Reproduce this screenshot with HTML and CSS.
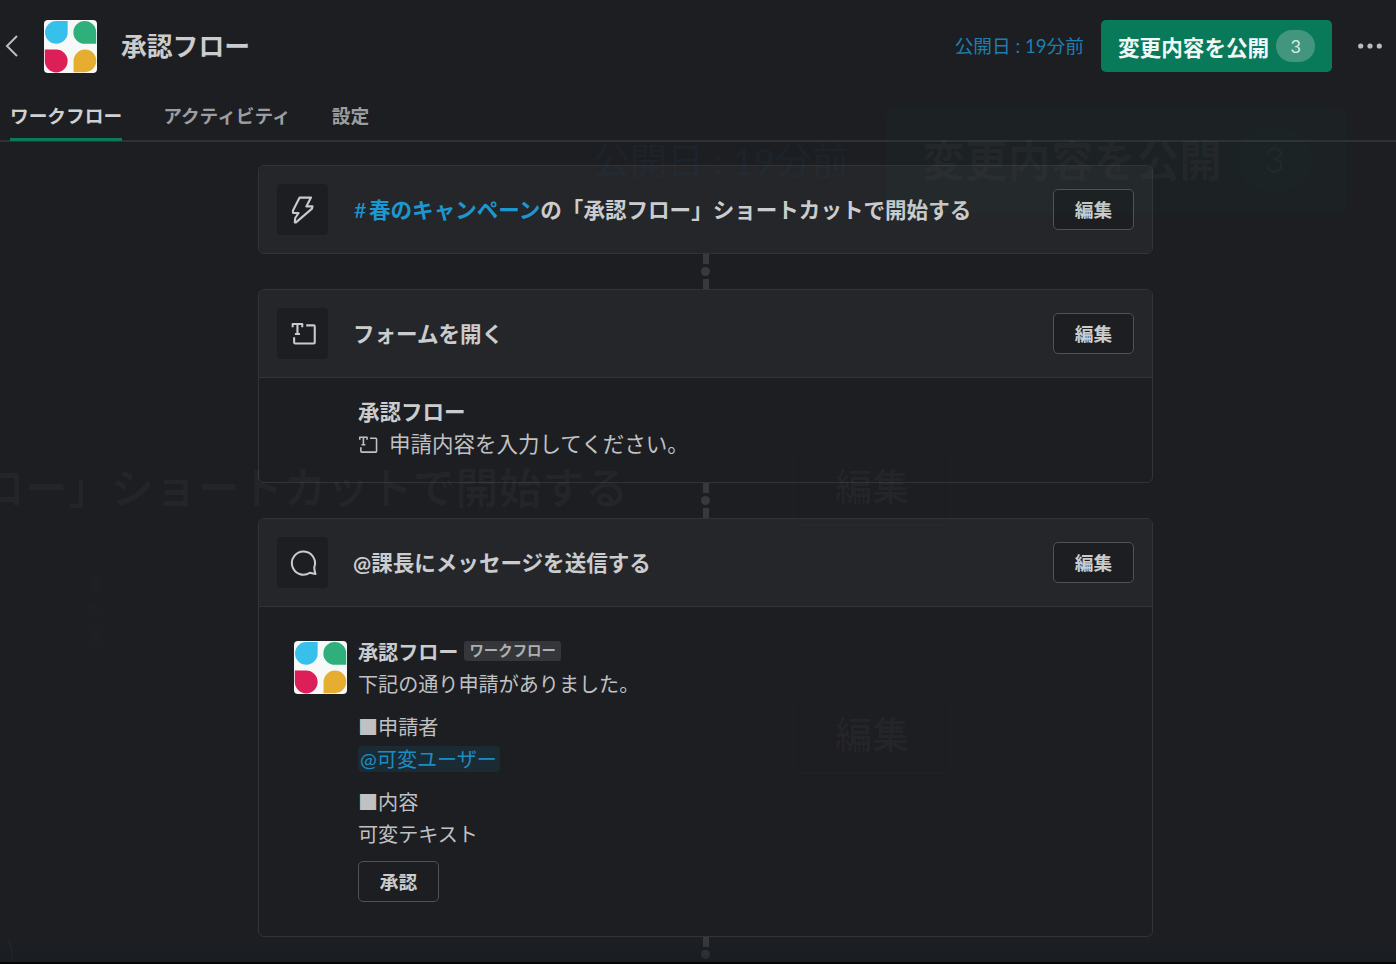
FILE: index.html
```html
<!DOCTYPE html>
<html lang="ja">
<head>
<meta charset="utf-8">
<title>承認フロー</title>
<link rel="stylesheet" href="styles.css">
</head>
<body>
<svg class="defs" aria-hidden="true">
  <symbol id="logo" viewBox="0 0 52 52">
    <rect width="52" height="52" rx="4" fill="#f7f8f8"/>
    <path fill="#37c0ea" d="M12 1H23.2V12A11.1 11.1 0 1 1 12 1Z"/>
    <path fill="#2fb07b" d="M40 1A11.2 11.2 0 0 1 51.2 12.2V23.4H40A11.2 11.2 0 0 1 40 1Z"/>
    <path fill="#dc1f59" d="M.8 29H12A11.2 11.2 0 1 1 .8 40.2Z"/>
    <path fill="#e5ae30" d="M40.2 29A11.1 11.1 0 1 1 40.2 51.2H29V40.2A11.2 11.2 0 0 1 40.2 29Z"/>
  </symbol>
  <symbol id="form" viewBox="0 0 24 24">
    <g fill="none" stroke="currentColor" stroke-width="2" stroke-linejoin="round">
      <path d="M14.600 4.200H21.800Q22.800 4.200 22.800 5.200V20.600Q22.800 21.600 21.800 21.600H4.200Q3 21.600 3 20.400V15.600"/>
      <path d="M1.600 6V2.800H10.800V6M6.200 2.800V12.400M3.800 12.400H8.600"/>
    </g>
  </symbol>
</svg>

<header class="header">
  <div class="topbar">
    <svg class="back" viewBox="0 0 14 24"><path d="M12 2 2 12 12 22"/></svg>
    <svg class="logo"><use href="#logo"/></svg>
    <h1 class="title">承認フロー</h1>
    <span class="published">公開日 : 19分前</span>
    <button class="publish">変更内容を公開<span class="count">3</span></button>
    <svg class="more" viewBox="0 0 24 6"><circle cx="2.7" cy="3" r="2.6"/><circle cx="12" cy="3" r="2.6"/><circle cx="21.3" cy="3" r="2.6"/></svg>
  </div>
  <nav class="tabs">
    <a class="tab tab-active">ワークフロー</a>
    <a class="tab">アクティビティ</a>
    <a class="tab">設定</a>
  </nav>
</header>

<main class="flow">
  <section class="card">
    <div class="step">
      <span class="step-icon"><svg class="icon" viewBox="0 0 24 28"><path d="M8.600 1.600H20L15.300 10.400H21.500L21 12.600L5 26.400H3.800L4.200 22L7.600 17H2.200Q1.600 15.600 2 14.400Z"/></svg></span>
      <h2 class="step-title"><span class="channel"><span class="hash">#</span>春のキャンペーン</span>の「承認フロー」ショートカットで開始する</h2>
      <button class="btn">編集</button>
    </div>
  </section>

  <div class="connector"><i class="bar"></i><i class="dot"></i><i class="bar"></i></div>

  <section class="card card-form">
    <div class="step step-lined">
      <span class="step-icon"><svg class="icon icon-form"><use href="#form"/></svg></span>
      <h2 class="step-title">フォームを開く</h2>
      <button class="btn">編集</button>
    </div>
    <div class="form-body">
      <strong>承認フロー</strong>
      <div class="field"><svg class="field-icon"><use href="#form"/></svg>申請内容を入力してください。</div>
    </div>
  </section>

  <div class="connector"><i class="bar"></i><i class="dot"></i><i class="bar"></i></div>

  <section class="card card-message">
    <div class="step step-lined">
      <span class="step-icon"><svg class="icon icon-bubble" viewBox="0 0 28 28"><path d="M26.400 26L20.600 24.600A12 12 0 1 1 25.200 18.800Q25 21 26.400 26Z"/></svg></span>
      <h2 class="step-title">@課長にメッセージを送信する</h2>
      <button class="btn">編集</button>
    </div>
    <div class="message">
      <svg class="logo"><use href="#logo"/></svg>
      <div class="message-body">
        <div class="sender"><strong>承認フロー</strong><span class="app-badge">ワークフロー</span></div>
        <div class="line">下記の通り申請がありました。</div>
        <div class="line line-gap">■申請者</div>
        <div class="line line-mention"><span class="mention">@可変ユーザー</span></div>
        <div class="line line-gap">■内容</div>
        <div class="line">可変テキスト</div>
        <button class="btn approve">承認</button>
      </div>
    </div>
  </section>

  <div class="connector"><i class="bar"></i><i class="dot"></i><i class="bar"></i></div>
</main>

<div class="afterimage" aria-hidden="true">
  <span class="ai ai-date">公開日 : 19分前</span>
  <span class="ai ai-publish"></span>
  <span class="ai ai-publish-text">変更内容を公開</span>
  <span class="ai ai-count">3</span>
  <span class="ai ai-title">ロー」ショートカットで開始する</span>
  <span class="ai ai-btn ai-btn-a">編集</span>
  <span class="ai ai-btn ai-btn-b">編集</span>
  <span class="ai ai-card ai-card-a"></span>
  <span class="ai ai-card ai-card-b"></span>
  <span class="ai ai-dots"><i class="bar"></i><i class="dot"></i><i class="bar"></i></span>
  <span class="ai ai-tail">)。</span>
</div>
<div class="edge" aria-hidden="true"></div>
</body>
</html>
```
FILE: styles.css
```css
* { box-sizing: border-box; }

body {
  margin: 0;
  width: 1396px;
  height: 964px;
  overflow: hidden;
  position: relative;
  background: #1d1e22;
  color: #cbcccd;
  font-family: Lato, "Noto Sans CJK JP", sans-serif;
  font-size: 20.1px;
}

h1, h2 { margin: 0; }
button { font-family: inherit; }
.defs { position: absolute; width: 0; height: 0; }

/* header */
.header { height: 142px; border-bottom: 2px solid #2f3135; }
.topbar {
  display: flex;
  align-items: center;
  height: 92px;
  padding: 0 14px 0 5px;
}
.back {
  width: 14px;
  height: 24px;
  margin-right: 25px;
  fill: none;
  stroke: #bcbdbe;
  stroke-width: 2;
}
.logo { width: 53px; height: 53px; flex: none; }
.title {
  margin-left: 24px;
  font-size: 25.8px;
  line-height: 36px;
}
.published { margin-left: auto; color: #1d7fb0; font-size: 18.7px; line-height: 28px; }
.publish {
  display: flex;
  align-items: center;
  width: 231px;
  height: 52px;
  margin-left: 17px;
  padding: 0 0 0 17px;
  border: 0;
  border-radius: 5px;
  background: #087a5a;
  color: #f2f7f5;
  font-size: 21.6px;
  font-weight: 700;
  white-space: nowrap;
}
.count {
  width: 39px;
  height: 32px;
  margin-left: 7px;
  border-radius: 16px;
  background: #41967d;
  color: #d9ebe5;
  font-size: 18px;
  font-weight: 400;
  line-height: 32px;
  text-align: center;
}
.more { width: 24px; height: 6px; margin-left: 26px; fill: #bbbcbd; }

.tabs { display: flex; gap: 41px; height: 49px; padding-left: 10px; }
.tab {
  height: 49px;
  font-size: 18.7px;
  font-weight: 700;
  line-height: 48px;
  color: #9c9da0;
}
.tab-active { color: #cfd0d1; border-bottom: 3px solid #087a5a; }

/* flow of steps */
.flow { width: 895px; margin: 23px 0 0 258px; }
.card {
  height: 89px;
  border: 1.4px solid #323337;
  border-radius: 6px;
  overflow: hidden;
}
.card-form { height: 194px; }
.card-message { height: 419px; }
.step {
  display: flex;
  align-items: center;
  height: 87px;
  padding: 0 18px;
  background: #25262a;
}
.step-lined { height: 88px; border-bottom: 1px solid #323337; }
.step-icon {
  display: flex;
  align-items: center;
  justify-content: center;
  width: 51px;
  height: 51px;
  padding-left: 1px;
  border-radius: 4px;
  background: #1d1e22;
}
.icon {
  width: 24px;
  height: 28px;
  fill: none;
  stroke: #c9cacb;
  stroke-width: 2.1;
  stroke-linejoin: round;
}
.icon-form { width: 25px; height: 25px; color: #c9cacb; stroke: none; }
.icon-bubble { width: 27px; height: 27px; }
.step-title {
  flex: 1;
  margin-left: 25px;
  font-size: 21.55px;
  line-height: 32px;
  white-space: nowrap;
}
.channel { color: #1d97cf; }
.hash { display: inline-block; width: 15px; margin-left: 1px; font-weight: 400; }
.btn {
  width: 81px;
  height: 41px;
  padding: 0;
  border: 1.4px solid #515256;
  border-radius: 5px;
  background: #1d1e22;
  color: #cbcccd;
  font-size: 18.7px;
  font-weight: 700;
  line-height: 36px;
}
.connector {
  display: flex;
  flex-direction: column;
  align-items: center;
  justify-content: space-between;
  height: 35px;
}
.bar { width: 6px; height: 10px; background: #38393d; }
.dot { width: 9px; height: 9px; border-radius: 50%; background: #38393d; }

.form-body { padding: 18px 0 0 99px; font-size: 21.5px; line-height: 32px; }
.form-body strong { display: block; }
.field { display: flex; align-items: center; color: #c0c1c2; }
.field-icon { width: 20px; height: 19px; margin-right: 11px; }

.message { display: flex; padding: 29px 0 0 35px; }
.message .logo { margin-top: 5px; }
.message-body { margin-left: 11px; line-height: 32px; }
.sender { display: flex; align-items: center; }
.app-badge {
  height: 20px;
  margin: -2px 0 0 6px;
  padding: 0 5px;
  border-radius: 3px;
  background: #35363a;
  color: #aeafb1;
  font-size: 14.4px;
  font-weight: 700;
  line-height: 20px;
}
.line { height: 32px; color: #c0c1c2; }
.line-gap { margin-top: 11px; }
.line-mention { display: flex; align-items: center; }
.mention {
  height: 26px;
  padding: 0 3px 0 2px;
  border-radius: 4px;
  background: #1b2b33;
  color: #1d8cc4;
  line-height: 26px;
}
.approve { display: block; margin-top: 11px; }

/* faint enlarged echo lying over the page */
.afterimage { position: absolute; inset: 0; overflow: hidden; pointer-events: none; }
.ai { position: absolute; white-space: nowrap; color: rgba(255, 255, 255, .026); }
.ai-date { left: 593px; top: 134px; font-size: 37px; line-height: 54px; color: rgba(30, 90, 130, .1); }
.ai-publish { left: 886px; top: 108px; width: 461px; height: 105px; border-radius: 10px; background: rgba(20, 110, 80, .045); }
.ai-publish-text { left: 922px; top: 132px; font-size: 42.9px; font-weight: 700; line-height: 58px; color: rgba(255, 225, 240, .035); }
.ai-count { left: 1237px; top: 128px; width: 75px; height: 63px; border-radius: 32px; background: rgba(60, 90, 110, .04); font-size: 36px; line-height: 63px; text-align: center; }
.ai-title { right: 768px; top: 458px; font-size: 43.1px; font-weight: 700; line-height: 58px; }
.ai-btn { left: 793px; width: 158px; height: 79px; border: 2px solid rgba(255, 255, 255, .01); border-radius: 9px; font-size: 37px; font-weight: 700; line-height: 75px; text-align: center; }
.ai-btn-a { top: 447px; }
.ai-btn-b { top: 695px; }
.ai-card { left: -10px; width: 998px; border: 2px solid rgba(255, 255, 255, .006); border-radius: 10px; }
.ai-card-a { top: 397px; height: 178px; }
.ai-card-b { top: 645px; height: 178px; }
.ai-dots { left: 87px; top: 576px; display: flex; flex-direction: column; align-items: center; justify-content: space-between; width: 17px; height: 68px; opacity: .05; }
.ai-dots .bar { width: 12px; height: 19px; }
.ai-dots .dot { width: 17px; height: 17px; }
.ai-tail { left: 6px; top: 930px; font-size: 34px; line-height: 46px; }

.edge { position: absolute; left: 0; right: 0; bottom: 0; height: 24px; border-bottom: 2px solid #040506; background: linear-gradient(rgba(20, 30, 36, 0), rgba(20, 30, 36, .5)); }
```
